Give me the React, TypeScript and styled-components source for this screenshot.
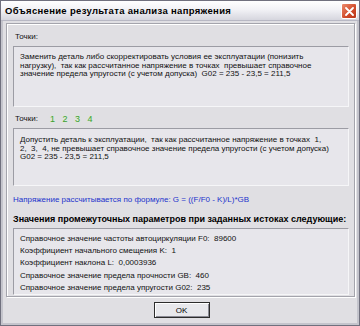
import * as React from 'react'
import styled, { createGlobalStyle } from 'styled-components'

const Global = createGlobalStyle`
    html, body {
        margin: 0;
        padding: 0;
        background: #ffffff;
    }
    #root {
        width: 360px;
        height: 326px;
    }
`

const Window = styled.div`
    box-sizing: border-box;
    width: 360px;
    height: 326px;
    display: flex;
    flex-direction: column;
    background: #e0dfe3;
    border: 1px solid #70707e;
    box-shadow: inset 0 0 0 2px #c4c4cc;
    font-family: "Liberation Sans", Arial, sans-serif;
    color: #111;
`

const TitleBar = styled.div`
    height: 19px;
    flex: none;
    display: flex;
    align-items: center;
    justify-content: space-between;
    padding: 0 2px 0 4px;
    background: linear-gradient(#ffffff, #f2f2f6 45%, #d6d6de);
    border-bottom: 1px solid #b8b8c4;
    .caption {
        font-size: 9.5px;
        font-weight: bold;
        letter-spacing: 0.32px;
        color: #000;
    }
`

const CloseButton = styled.div`
    width: 14px;
    height: 14px;
    border: 1px solid #ffffff;
    border-radius: 2px;
    background: linear-gradient(135deg, #ec8a6c, #d04a2a 60%, #b83618);
    display: flex;
    align-items: center;
    justify-content: center;
    margin-top: 1px;
`

const Body = styled.div`
    flex: 1;
    display: flex;
    flex-direction: column;
    padding: 2px 4px 0 5px;
`

const Frame = styled.div`
    height: 274px;
    box-sizing: border-box;
    border: 1px solid #a4a4ac;
    box-shadow: 1px 1px 0 #ffffff, inset 1px 1px 0 #ffffff;
    padding: 4px 5px 0 6px;
    display: flex;
    flex-direction: column;
`

const Label = styled.div<{ top: number }>`
    font-size: 8px;
    line-height: 10px;
    height: 10px;
    padding-left: 2px;
    display: flex;
    align-items: center;
    margin-top: ${(p) => p.top}px;
`

const Points = styled.span`
    display: flex;
    gap: 7.5px;
    margin-left: 12px;
    span {
        color: #3f9a34;
        font-size: 9px;
        text-shadow: 0 0 2px #d4f5cc, 0 0 1px #d4f5cc;
    }
`

const Box = styled.div<{ h: number; lh: number; pt: number }>`
    box-sizing: border-box;
    height: ${(p) => p.h}px;
    margin-top: 4px;
    background: #e7e6eb;
    border: 1px solid #9c9ca4;
    border-right-color: #f6f6f8;
    border-bottom-color: #f6f6f8;
    padding: ${(p) => p.pt}px 4px 0 6px;
    font-size: 8px;
    line-height: ${(p) => p.lh}px;
    white-space: pre;
    div {
        white-space: pre;
    }
`

const Formula = styled.div`
    margin-top: 9px;
    font-size: 8px;
    line-height: 10px;
    color: #2233cc;
`

const Heading = styled.div`
    margin-top: 9px;
    font-size: 9px;
    line-height: 10px;
    font-weight: bold;
    color: #000;
`

const Footer = styled.div`
    display: flex;
    justify-content: center;
    padding-top: 5px;
    padding-left: 2px;
`

const OkButton = styled.button`
    width: 56px;
    height: 16px;
    box-sizing: border-box;
    padding: 0;
    background: #e8e8ec;
    border: 1px solid #2c2c2c;
    box-shadow: inset 1px 1px 0 #ffffff, inset -1px -1px 0 #8a8a94;
    font-family: "Liberation Sans", Arial, sans-serif;
    font-size: 8px;
    color: #000;
`

const first = [
    'Заменить деталь либо скорректировать условия ее эксплуатации (понизить',
    'нагрузку),  так как рассчитанное напряжение в точках  превышает справочное',
    'значение предела упругости (с учетом допуска)  G02 = 235 - 23,5 = 211,5',
]

const second = [
    'Допустить деталь к эксплуатации,  так как рассчитанное напряжение в точках  1,',
    '2,  3,  4, не превышает справочное значение предела упругости (с учетом допуска)',
    'G02 = 235 - 23,5 = 211,5',
]

const params = [
    'Справочное значение частоты автоциркуляции F0:  89600',
    'Коэффициент начального смещения K:  1',
    'Коэффициент наклона L:  0,0003936',
    'Справочное значение предела прочности GB:  460',
    'Справочное значение предела упругости G02:  235',
]

export default function App() {
    return <>
        <Global />
        <Window>
            <TitleBar>
                <span className="caption">Объяснение результата анализа напряжения</span>
                <CloseButton>
                    <svg width="9" height="9" viewBox="0 0 9 9">
                        <path d="M1 1 L8 8 M8 1 L1 8" stroke="#ffffff" strokeWidth="1.8" strokeLinecap="round" />
                    </svg>
                </CloseButton>
            </TitleBar>
            <Body>
                <Frame>
                    <Label top={4}>Точки:</Label>
                    <Box h={61} lh={8.5} pt={6}>
                        {first.map((line) => <div key={line}>{line}</div>)}
                    </Box>
                    <Label top={7}>
                        Точки:
                        <Points>
                            <span>1</span><span>2</span><span>3</span><span>4</span>
                        </Points>
                    </Label>
                    <Box h={58} lh={8.5} pt={7}>
                        {second.map((line) => <div key={line}>{line}</div>)}
                    </Box>
                    <Formula>Напряжение рассчитывается по формуле: G = ((F/F0 - K)/L)*GB</Formula>
                    <Heading>Значения промежуточных параметров при заданных истоках следующие:</Heading>
                    <Box h={67} lh={12.2} pt={4}>
                        {params.map((line) => <div key={line}>{line}</div>)}
                    </Box>
                </Frame>
                <Footer>
                    <OkButton>OK</OkButton>
                </Footer>
            </Body>
        </Window>
    </>
}
